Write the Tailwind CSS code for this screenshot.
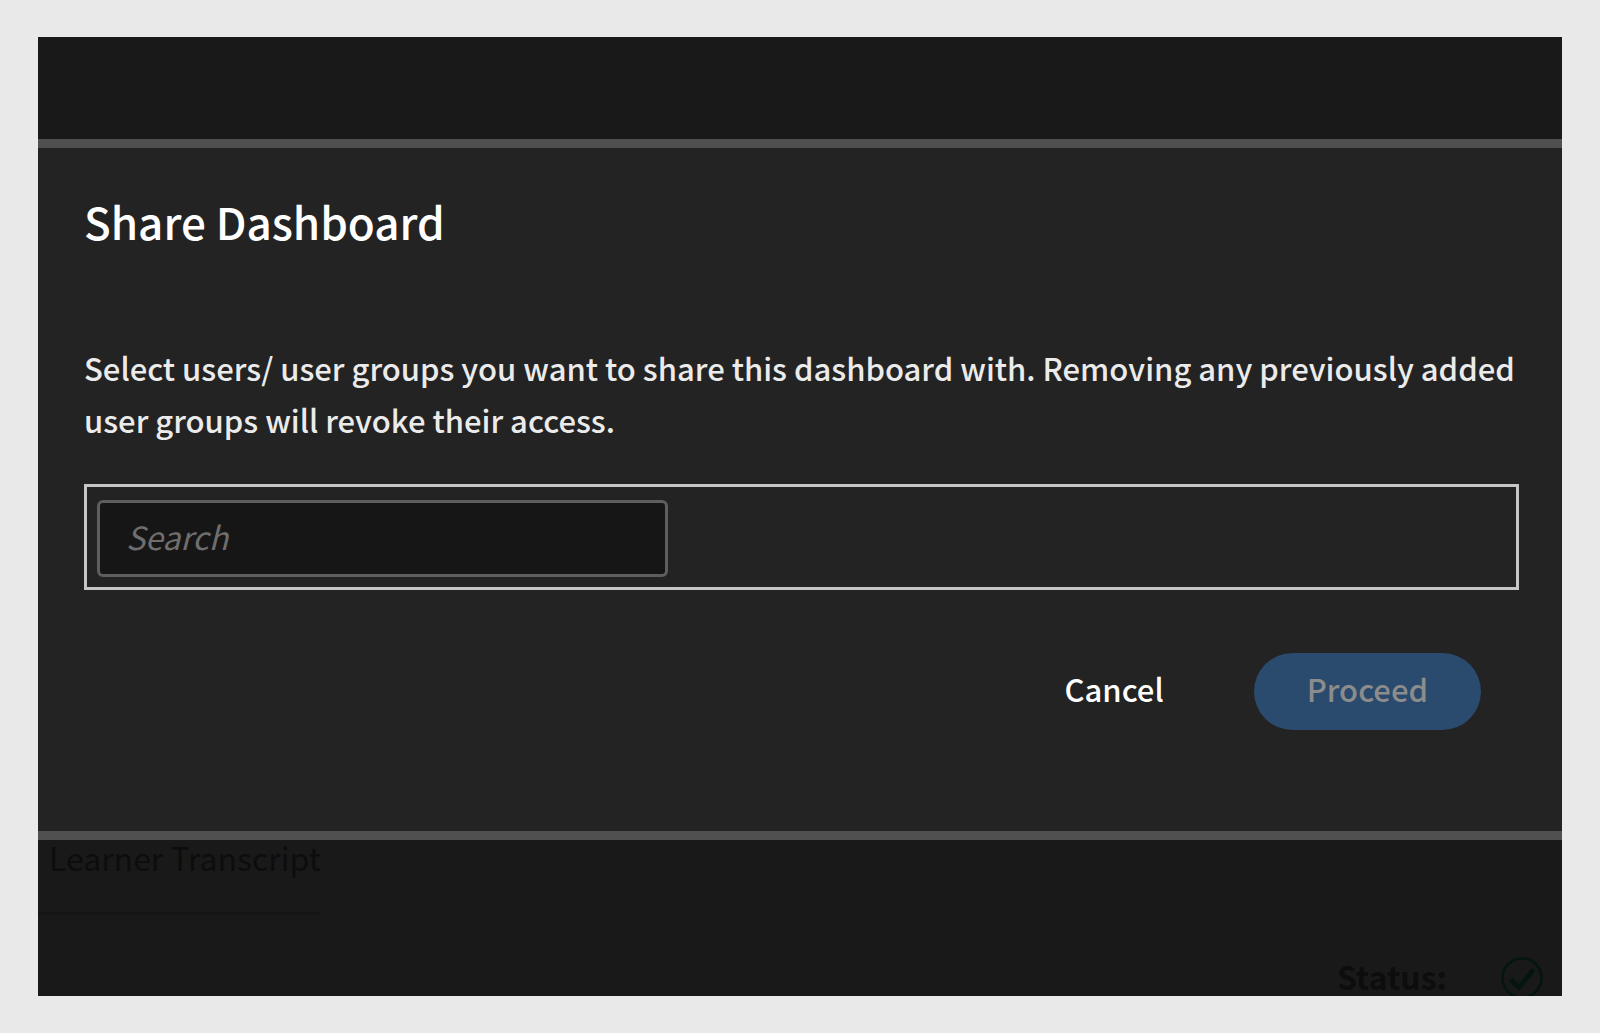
<!DOCTYPE html>
<html lang="en">
<head>
<meta charset="utf-8">
<meta name="viewport" content="width=device-width, initial-scale=1">
<title>Share Dashboard</title>
<script src="https://cdn.jsdelivr.net/npm/@tailwindcss/browser@4"></script>
</head>
<body class="flex min-h-screen bg-[#e9e9e9] px-[38px] py-[37px] font-['Noto_Sans_CJK_SC','Noto_Sans',sans-serif] text-[32px]">
<div class="flex flex-1 flex-col overflow-hidden bg-[#191919]">
  <header class="h-[102px] shrink-0"></header>

  <section role="dialog" aria-labelledby="title" class="flex flex-col border-y-[9px] border-[#505050] bg-[#232323] pt-[45px] pr-[43px] pb-[101px] pl-[46px]">
    <h1 id="title" class="text-[44px] leading-[56px] font-medium text-white">Share Dashboard</h1>
    <p class="mt-[93px] text-[31px] leading-[52px] font-medium text-[#ebebeb]">Select users/ user groups you want to share this dashboard with. Removing any previously added user groups will revoke their access.</p>
    <div class="mt-[38px] border-[3px] border-[#c6c6c6] px-[10px] pt-[13px] pb-[10px]">
      <input type="search" aria-label="Search users or user groups" placeholder="Search" class="block h-[77px] w-[571px] max-w-full rounded-md border-[3px] border-[#5e5e5e] bg-[#161616] px-[26px] pb-[6px] text-white italic placeholder:text-[#6e6e6e]">
    </div>
    <div class="mt-[63px] flex justify-end gap-[37px] pr-[38px] text-[31px] font-medium">
      <button type="button" class="h-[77px] rounded-full px-[53px] pb-1 text-white">Cancel</button>
      <button type="button" disabled class="h-[77px] rounded-full bg-[#2a4a6e] px-[53px] pb-1 text-[#8c8c8c]">Proceed</button>
    </div>
  </section>

  <main class="flex flex-1 flex-col items-start text-[#0d0d0d]">
    <h2 class="border-b-[3px] border-[#151515] pb-[38px] pl-[11px] leading-[34px]">Learner Transcript</h2>
    <div class="mt-auto -mb-[3px] flex items-center gap-[54px] self-end pr-[19px]">
      <span class="mb-1 leading-[34px] font-bold">Status:</span>
      <svg class="size-[42px]" viewBox="0 0 42 42" fill="none" stroke="#04150f" role="img" aria-label="Complete">
        <circle cx="21" cy="21" r="19.5" stroke-width="2.5"/>
        <path d="M9.500 22.500l8.500 8L32.500 12.500" stroke-width="4.500"/>
      </svg>
    </div>
  </main>
</div>
</body>
</html>
